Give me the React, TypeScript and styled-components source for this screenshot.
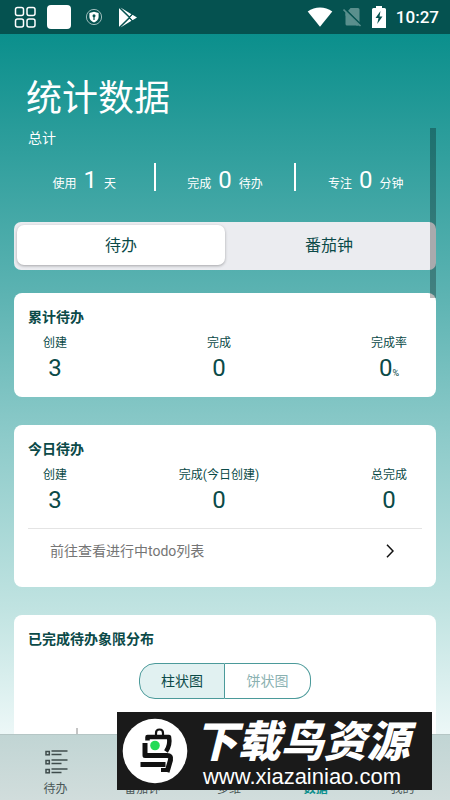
import React, { useState } from "react";
import styled, { createGlobalStyle } from "styled-components";
import { LayoutGrid, PieChart, Timer, User } from "lucide-react";

const ink = "#0b4a48";
const teal = "#0d8f8c";

const GlobalStyle = createGlobalStyle`
  * { box-sizing: border-box; }
  body {
    margin: 0;
    color: ${ink};
    font-family: Roboto, "Noto Sans CJK SC", sans-serif;
    font-size: 12px;
  }
  button { font-family: inherit; cursor: pointer; }
  a { color: inherit; text-decoration: none; }
`;

const Screen = styled.div`
  display: flex;
  flex-direction: column;
  height: 100vh;
  overflow: hidden;
  background: linear-gradient(
    #0a8f8c 4%,
    #309f9d 19%,
    #5ab2b1 36%,
    #8ecbca 55%,
    #c0e3e1 76%,
    #f0f9f9 93%
  );
`;

const StatusBar = styled.header`
  flex: none;
  display: flex;
  align-items: center;
  justify-content: space-between;
  height: 34px;
  padding: 0 11px 0 14px;
  background: #055250;
  color: #fff;
`;

const StatusGroup = styled.div<{ $gap: number }>`
  display: flex;
  align-items: center;
  gap: ${({ $gap }) => $gap}px;
  svg { display: block; }
`;

const AppTile = styled.span`
  width: 24px;
  height: 24px;
  border-radius: 4px;
  background: #fff;
`;

const Clock = styled.time`
  font-size: 17px;
  font-weight: 500;
  line-height: 20px;
`;

const Body = styled.main`
  flex: 1;
  min-height: 0;
  overflow: hidden;
  padding: 39px 14px 0;
`;

const Heading = styled.h1`
  margin: 0 12px;
  color: #fff;
  font-size: 36px;
  font-weight: 400;
  line-height: 52px;
`;

const Subheading = styled.p`
  margin: 3px 14px 0;
  color: #fff;
  font-size: 14px;
  line-height: 20px;
`;

const Totals = styled.div`
  display: grid;
  grid-template-columns: repeat(3, 1fr);
  margin-top: 15px;
  color: #fff;
`;

const Total = styled.div`
  display: flex;
  align-items: baseline;
  justify-content: center;
  gap: 7px;
  height: 28px;
  line-height: 28px;
  & + & { box-shadow: -1px 0 #fff, inset 1px 0 #fff; }
  strong { font-size: 24px; font-weight: 400; line-height: 34px; }
`;

const Tabs = styled.div`
  display: grid;
  grid-template-columns: 1fr 1fr;
  margin-top: 31px;
  height: 48px;
  padding: 3px 3px 5px;
  border-radius: 7px;
  background: #ebecf0;
`;

const Tab = styled.button<{ $active: boolean }>`
  border: 0;
  padding: 2px 0 0;
  border-radius: 7px;
  color: ${ink};
  font-size: 16px;
  line-height: 24px;
  background: ${({ $active }) => ($active ? "#fff" : "transparent")};
  box-shadow: ${({ $active }) => ($active ? "0 1px 3px rgba(0, 0, 0, 0.3)" : "none")};
`;

const Card = styled.section<{ $gap: number }>`
  margin-top: ${({ $gap }) => $gap}px;
  padding: 14px 14px 8px;
  border-radius: 8px;
  background: #fff;
`;

const CardTitle = styled.h2`
  margin: 0;
  font-size: 14px;
  font-weight: 700;
  line-height: 20px;
`;

const Metrics = styled.dl`
  display: flex;
  justify-content: space-between;
  margin: 7px 15px 0;
`;

const Metric = styled.div`
  text-align: center;
  dt { line-height: 18px; }
  dd { margin: 0; font-size: 24px; line-height: 32px; }
  small { font-size: 9px; }
`;

const ListLink = styled.a`
  display: flex;
  align-items: center;
  justify-content: space-between;
  margin-top: 12px;
  padding: 12px 28px 18px 22px;
  border-top: 1px solid #e4e4e4;
  color: #757575;
  font-size: 14px;
  line-height: 20px;
`;

const Toggle = styled.div`
  display: flex;
  width: fit-content;
  margin: 14px auto 0;
`;

const ToggleButton = styled.button<{ $active: boolean }>`
  width: 86px;
  height: 36px;
  padding: 0;
  border: 1px solid #4b9a9a;
  font-size: 14px;
  line-height: 20px;
  color: ${({ $active }) => ($active ? ink : "#8ab1b1")};
  background: ${({ $active }) => ($active ? "#e1f1f1" : "#fff")};
  &:first-child { border-radius: 16px 0 0 16px; }
  &:last-child { border-radius: 0 16px 16px 0; border-left: 0; }
`;

const Chart = styled.svg`
  display: block;
  width: 100%;
  height: 200px;
  margin-top: 29px;
`;

const ScrollThumb = styled.div`
  position: fixed;
  top: 128px;
  right: 14px;
  width: 6px;
  height: 170px;
  background: rgba(0, 0, 0, 0.28);
`;

const BottomNav = styled.nav`
  flex: none;
  display: grid;
  grid-template-columns: repeat(5, 1fr);
  height: 66px;
  padding: 15px 4px 0 12px;
  border-top: 1px solid #b5c6c5;
  background: linear-gradient(#c1d5d4, #d1dddc);
`;

const NavItem = styled.a<{ $active?: boolean }>`
  display: flex;
  flex-direction: column;
  align-items: center;
  gap: 6px;
  color: ${({ $active }) => ($active ? teal : "#4a5757")};
  font-weight: ${({ $active }) => ($active ? 700 : 400)};
  line-height: 18px;
`;

const Banner = styled.aside`
  position: fixed;
  right: 4%;
  bottom: 10px;
  left: 26%;
  display: flex;
  align-items: center;
  height: 78px;
  padding: 0 16px 0 5px;
  overflow: hidden;
  background: #1a1a1a;
  color: #fff;
  white-space: nowrap;
  svg { flex: none; }
`;

const BannerText = styled.div`
  flex: 1;
  display: flex;
  flex-direction: column;
  align-items: center;
  padding-top: 6px;
`;

const BannerName = styled.div`
  font-size: 43px;
  font-style: italic;
  font-weight: 900;
  line-height: 46px;
`;

const BannerUrl = styled.div`
  font-family: "Liberation Sans", sans-serif;
  font-size: 22px;
  line-height: 24px;
`;

const GridIcon = () => (
  <svg width="23" height="23" viewBox="0 0 23 23" fill="none" stroke="#fff" strokeWidth="1.500">
    <rect x="1.500" y="1.500" width="8" height="8" rx="2" />
    <rect x="13" y="1.500" width="8" height="8" rx="2" />
    <rect x="1.500" y="13" width="8" height="8" rx="2" />
    <rect x="13" y="13" width="8" height="8" rx="2" />
  </svg>
);

const ShieldIcon = () => (
  <svg width="18" height="18" viewBox="0 0 18 18">
    <circle cx="9" cy="9" r="7.600" fill="none" stroke="#9dbcbb" />
    <path d="M9 3.800 13.600 5v4c0 2.600-1.900 4.300-4.600 5.400C6.300 13.300 4.400 11.600 4.400 9V5z" fill="#fff" />
    <circle cx="9" cy="7.700" r="1.500" fill="#055250" />
    <path d="M9 8v4" stroke="#055250" strokeWidth="1.200" />
  </svg>
);

const PlayIcon = () => (
  <svg width="20" height="21" viewBox="0 0 20 21">
    <path d="M1 1 11 10.500 1 20z" fill="#fff" />
    <path d="M2.500.500 13.500 7.200 11.500 9.300z" fill="#fff" />
    <path d="M2.500 20.500 13.500 13.800 11.500 11.700z" fill="#fff" />
    <path d="M14.500 7.700 19 10.500 14.500 13.300 12 10.500z" fill="#fff" />
    <path d="M1.500.800 14.500 13.800M1.500 20.200 14.500 7.200" stroke="#055250" strokeWidth="1" />
  </svg>
);

const WifiIcon = () => (
  <svg width="26" height="20" viewBox="0 0 26 20">
    <path d="M.700 4.500C8 -.900 18 -.900 25.300 4.500L13 19.700z" fill="#fff" />
  </svg>
);

const NoSimIcon = () => (
  <svg width="19" height="20" viewBox="0 0 19 20">
    <path d="M7.500 1H15q1.500 0 1.500 1.500V16L5 4zM2.500 6 15.500 18.500H4q-1.500 0-1.500-1.500z" fill="#5a8f8d" />
    <path d="M2.500 4.500v4l11 10h3z" fill="#5a8f8d" />
    <path d="M2 2 19 18.500" stroke="#055250" strokeWidth="1.500" />
    <path d="M.500 2.500 17.500 19" stroke="#5a8f8d" strokeWidth="1.600" />
  </svg>
);

const BatteryIcon = () => (
  <svg width="14" height="22" viewBox="0 0 14 22">
    <path d="M4 0h6v2h2.500q1.500 0 1.500 1.500V22H0V3.500Q0 2 1.500 2H4z" fill="#fff" />
    <path d="M8.500 5 3.500 12h3L5.200 18 10.500 10.500h-3z" fill="#055250" />
  </svg>
);

const ListIcon = () => (
  <svg width="26" height="24" viewBox="0 0 26 24" fill="none" stroke="#3f4c4c" strokeWidth="1.500">
    {[1, 10, 19].map((y) => (
      <g key={y}>
        <rect x="4" y={y + 0.5} width="3.300" height="3.300" />
        <path d={`M9.500 ${y}h16M9.500 ${y + 3.5}h10`} />
      </g>
    ))}
  </svg>
);

const BirdLogo = () => (
  <svg width="66" height="66" viewBox="0 0 66 66" aria-hidden="true">
    <circle cx="33" cy="33" r="32.300" fill="#fff" />
    <g fill="none" stroke="#111" strokeWidth="4.500" strokeLinejoin="round">
      <path d="M34 18v-3q0-3.500 3.500-3.500T41 15v3" strokeWidth="2.200" />
      <path d="M25.500 22.500V19H47q1.500 8-3 14.500" />
      <path d="M23 25v12.500h22q4.500 0 3.500 4.500l-3.500 12" strokeWidth="5" />
      <path d="M18.500 46.500h25" strokeWidth="5" />
      <path d="M39 52h8" strokeWidth="4" />
    </g>
    <circle cx="33" cy="27.500" r="4.800" fill="#22db57" />
  </svg>
);

const totals = [
  ["使用", "1", "天"],
  ["完成", "0", "待办"],
  ["专注", "0", "分钟"],
];

type MetricData = { label: string; value: number; unit?: string };

const MetricRow = ({ items }: { items: MetricData[] }) => (
  <Metrics>
    {items.map(({ label, value, unit }) => (
      <Metric key={label}>
        <dt>{label}</dt>
        <dd>
          {value}
          {unit && <small>{unit}</small>}
        </dd>
      </Metric>
    ))}
  </Metrics>
);

export default function App() {
  const [tab, setTab] = useState("待办");
  const [chart, setChart] = useState("柱状图");

  return (
    <>
      <GlobalStyle />
      <Screen lang="zh-CN">
        <StatusBar>
          <StatusGroup $gap={14}>
            <StatusGroup $gap={10}>
              <GridIcon />
              <AppTile />
            </StatusGroup>
            <StatusGroup $gap={15}>
              <ShieldIcon />
              <PlayIcon />
            </StatusGroup>
          </StatusGroup>
          <StatusGroup $gap={10}>
            <WifiIcon />
            <NoSimIcon />
            <BatteryIcon />
            <Clock>10:27</Clock>
          </StatusGroup>
        </StatusBar>

        <Body>
          <Heading>统计数据</Heading>
          <Subheading>总计</Subheading>
          <Totals>
            {totals.map(([before, value, after]) => (
              <Total key={before}>
                <span>{before}</span>
                <strong>{value}</strong>
                <span>{after}</span>
              </Total>
            ))}
          </Totals>

          <Tabs>
            {["待办", "番茄钟"].map((name) => (
              <Tab key={name} type="button" $active={tab === name} aria-pressed={tab === name} onClick={() => setTab(name)}>
                {name}
              </Tab>
            ))}
          </Tabs>

          <Card $gap={23}>
            <CardTitle>累计待办</CardTitle>
            <MetricRow
              items={[
                { label: "创建", value: 3 },
                { label: "完成", value: 0 },
                { label: "完成率", value: 0, unit: "%" },
              ]}
            />
          </Card>

          <Card $gap={28}>
            <CardTitle>今日待办</CardTitle>
            <MetricRow
              items={[
                { label: "创建", value: 3 },
                { label: "完成(今日创建)", value: 0 },
                { label: "总完成", value: 0 },
              ]}
            />
            <ListLink href="#todo">
              前往查看进行中todo列表
              <svg width="8" height="14" viewBox="0 0 8 14" fill="none" stroke="#111" strokeWidth="1.500">
                <path d="M1 .700 7 7 1 13.300" />
              </svg>
            </ListLink>
          </Card>

          <Card $gap={28}>
            <CardTitle>已完成待办象限分布</CardTitle>
            <Toggle>
              {["柱状图", "饼状图"].map((name) => (
                <ToggleButton
                  key={name}
                  type="button"
                  $active={chart === name}
                  aria-pressed={chart === name}
                  onClick={() => setChart(name)}
                >
                  {name}
                </ToggleButton>
              ))}
            </Toggle>
            <Chart>
              <path d="M49 0V200" stroke="#8a8a8a" />
            </Chart>
          </Card>
        </Body>

        <BottomNav>
          <NavItem href="#todo-tab"><ListIcon />待办</NavItem>
          <NavItem href="#timer"><Timer size={24} />番茄钟</NavItem>
          <NavItem href="#views"><LayoutGrid size={24} />多维</NavItem>
          <NavItem href="#data" $active><PieChart size={24} />数据</NavItem>
          <NavItem href="#me"><User size={24} />我的</NavItem>
        </BottomNav>
      </Screen>
      <ScrollThumb />
      <Banner>
        <BirdLogo />
        <BannerText>
          <BannerName>下载鸟资源</BannerName>
          <BannerUrl>www.xiazainiao.com</BannerUrl>
        </BannerText>
      </Banner>
    </>
  );
}
